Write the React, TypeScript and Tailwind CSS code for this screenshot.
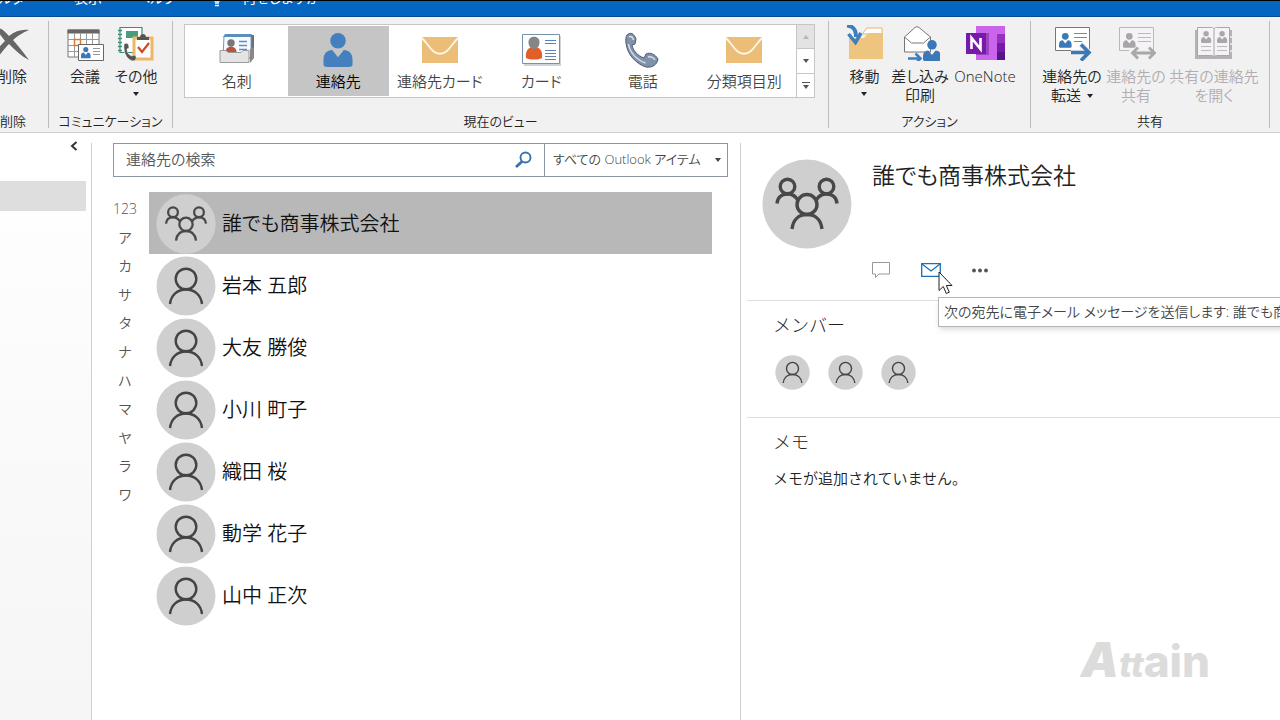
import type { ReactNode } from "react";

const people = ["岩本 五郎", "大友 勝俊", "小川 町子", "織田 桜", "動学 花子", "山中 正次"];
const indexKeys = ["123", "ア", "カ", "サ", "タ", "ナ", "ハ", "マ", "ヤ", "ラ", "ワ"];

/* ---------- Avatars ---------- */

const PersonAvatar = ({ className }: { className: string }) => (
    <svg viewBox="0 0 60 60" className={className} fill="none" stroke="#444" strokeWidth="2.400" aria-hidden="true">
        <circle cx="30" cy="30" r="29.5" fill="#cfcfcf" stroke="none" />
        <circle cx="30" cy="23" r="10.3" />
        <path d="M14 48c1-9 7.500-14.500 16-14.500S45 39 46 48" />
    </svg>
);

const GroupAvatar = ({ className }: { className: string }) => (
    <svg viewBox="0 0 90 90" className={className} fill="none" stroke="#484848" strokeWidth="3.400" aria-hidden="true">
        <circle cx="45" cy="45" r="44.500" fill="#cfcfcf" stroke="none" />
        <circle cx="25.500" cy="27.500" r="7.300" />
        <circle cx="64.500" cy="27.500" r="7.300" />
        <circle cx="45" cy="45.500" r="10" />
        <path d="M15 44.500c.5-6 4.500-9.500 10.500-9.500 5 0 8.500 2.500 10.500 6.500M75 44.500c-.5-6-4.500-9.500-10.500-9.500-5 0-8.500 2.500-10.500 6.500" />
        <path d="M30 70c1-9 6.500-14.500 15-14.500S59 61 60 70" />
    </svg>
);

/* ---------- Ribbon icons ---------- */

const Bust = ({ x, y, s = 1, fill = "#3c78b8" }: { x: number; y: number; s?: number; fill?: string }) => (
    <g transform={`translate(${x} ${y}) scale(${s})`} fill={fill}>
        <circle cx="6" cy="3.200" r="3.200" />
        <path d="M0 13V11c0-2.500 1.500-4 3.600-4L6 10l2.400-3c2.100 0 3.600 1.500 3.600 4v2c0 .8-.8 1-1.600 1H1.600C.8 14 0 13.800 0 13z" />
    </g>
);

const Icon = ({ children }: { children: ReactNode }) => (
    <svg viewBox="0 0 40 36" className="h-9 w-10 shrink-0" fill="none" aria-hidden="true">
        {children}
    </svg>
);

const DeleteIcon = () => (
    <Icon>
        <path d="M3 3c5-1 9 2 14 8C23 6 30 4 37 5c-7 3-12 6-16 10 6 7 11 13 16 20C29 31 23 25 17 19 13 23 8 29 5 34L1 30c4-6 8-10 12-14C9 11 6 7 3 3z" fill="#666" />
    </Icon>
);

const MeetingIcon = () => (
    <Icon>
        <path d="M3 5h31v27H3z" fill="#fff" stroke="#777" />
        <path d="M2.500 4.500h32v4h-32z" fill="#666" />
        <path d="M3 14.500h31M3 20.500h31M3 26.500h31M9.500 8v24M15.500 8v24M21.500 8v24M27.500 8v24" stroke="#999" />
        <path d="M9.500 14.500h6v6h-6z" stroke="#e07b2d" strokeWidth="1.500" />
        <path d="M13.500 19.500h25v16h-25z" fill="#fff" stroke="#666" />
        <Bust x={16} y={22} s={0.8} />
        <path d="M28 23.500h7M28 26.500h7M28 29.500h7" stroke="#999" />
    </Icon>
);

const MoreIcon = () => (
    <Icon>
        <path d="M4 2.500h22v25H4z" fill="#fff" stroke="#3c8f72" strokeWidth="1.200" />
        <path d="M2 5.500h4M2 9.500h4M2 13.500h4M2 17.500h4M2 21.500h4M2 25.500h4" stroke="#3c8f72" strokeWidth="1.400" />
        <path d="M10 6h12v7H10z" fill="#4b9b7d" />
        <path d="M18 13h18v21H18z" fill="#fff" stroke="#ecb766" strokeWidth="3" />
        <path d="M21 15v-3h3c0-4 6-4 6 0h3v3z" fill="#555" />
        <path d="M22 22l4 5 7-9" stroke="#d0491e" strokeWidth="2.200" />
        <path d="M8 19c3-2 5 0 5 4l-2 1c0 4 2 6 5 7l2-1c3 1 3 4 0 6-6 0-11-7-10-17z" fill="#555" stroke="#f1f1f1" strokeWidth=".6" />
    </Icon>
);

const BusinessCardIcon = () => (
    <Icon>
        <path d="M11 5l2-2h24v20l-4 4z" fill="#66707a" />
        <path d="M7 4.500h27v21H6z" fill="#f7fbff" stroke="#7396b8" />
        <path d="M8 2h27l-2 3H6z" fill="#5d8dbd" />
        <circle cx="14" cy="11" r="3.700" fill="#777" />
        <path d="M8.500 20c0-7 11-7 11 0z" fill="#b8543c" />
        <path d="M22 9.500h8M22 13.500h8M22 17.500h8" stroke="#5b8ccc" strokeWidth="1.300" />
        <path d="M33 17l4-2v11l-4 5z" fill="#888" />
        <path d="M3 18.500h6l2 2h13l2-2h6v12H3z" fill="#e4e4e4" stroke="#9a9a9a" />
    </Icon>
);

const ContactIcon = () => (
    <Icon>
        <Bust x={5.500} y={1} s={2.420} fill="#4380bd" />
    </Icon>
);

const EnvelopeIcon = () => (
    <Icon>
        <path d="M2 5h36v26H2z" fill="#ebbd76" />
        <path d="M2 6c4 4 7 9 11 13 5 4 9 4 14 0 4-4 7-9 11-13" stroke="#fff8ea" strokeWidth="1.800" />
    </Icon>
);

const CardIcon = () => (
    <Icon>
        <path d="M3 4h37v30H3z" fill="#d0d4d9" />
        <path d="M1.500 2.500h37v29h-37z" fill="#fff" stroke="#7991aa" />
        <path d="M5 26c-1-8 3-11 8-11s9 3 8 11c-4 2-12 2-16 0z" fill="#e35f2a" />
        <path d="M7.500 10c0-7 11-7 11 0 0 4-2 7-5.500 7s-5.500-3-5.500-7z" fill="#858585" />
        <path d="M24 8.500h11M24 11.500h11" stroke="#4f83cc" strokeWidth="1.200" />
        <path d="M24 18.500h11M24 21.500h11M24 24.500h11M24 27.500h11" stroke="#5f83ad" strokeWidth="1" />
    </Icon>
);

const PhoneIcon = () => (
    <Icon>
        <path d="M4 3c3-3 7-2 9 4l-1 5-3 1c1 6 6 11 12 13l2-4c4-2 9 0 12 5-1 6-6 9-12 8C13 32 4 22 3 11c-.5-3-.3-6 1-8z" fill="#8091a9" stroke="#4d5d74" />
        <path d="M6 5c2-1 4 0 4.500 3M5.500 12c1 8 8 16 17 19M25 25c3-1 6 1 7 3" stroke="#d5deea" strokeWidth="1.500" />
    </Icon>
);

const MoveIcon = () => (
    <Icon>
        <path d="M18 8l4-5h15v6H18z" fill="#fff" stroke="#e7b56a" />
        <path d="M4 13h15l4-5h15v26H4z" fill="#edc57f" />
        <path d="M2 .5C8 1 11 4 11 12" stroke="#3d7ebf" strokeWidth="4" />
        <path d="M3.500 9l7 8.500L16 8" stroke="#3d7ebf" strokeWidth="3.500" />
    </Icon>
);

const MailMergeIcon = () => (
    <Icon>
        <path d="M4.500 12L15 2.500c1.500-1 2.500-1 4 0L30.500 12v15h-26z" fill="#fff" stroke="#777" />
        <path d="M4.500 12l7 6h12l7-6" stroke="#777" />
        <Bust x={23} y={15} s={1.500} />
        <path d="M8 33.500h12M15.500 28.500l5 5-5 5" stroke="#3d7ebf" strokeWidth="2.600" />
    </Icon>
);

const OneNoteIcon = () => (
    <Icon>
        <path d="M11 1h29v34H11z" fill="#ca64ea" />
        <path d="M32 9h8v9h-8z" fill="#9332bf" />
        <path d="M32 18h8v9h-8z" fill="#7719aa" />
        <path d="M32 27h8v8h-8z" fill="#53148c" />
        <path d="M11 8h13v22H11z" fill="#9c44bd" />
        <path d="M1 8h20v21H1z" fill="#7719aa" />
        <path d="M6.500 24V13l9 11V13" stroke="#fff" strokeWidth="2.600" />
    </Icon>
);

const ForwardIcon = () => (
    <Icon>
        <path d="M3.500 2.500h34v23h-34z" fill="#fff" stroke="#777" />
        <Bust x={7} y={8} s={1.050} />
        <path d="M22 8.500h13M22 12.500h13M22 16.500h8" stroke="#888" />
        <path d="M19 27.500h17M28 19l9 8.500-9 7" stroke="#f1f1f1" strokeWidth="6" />
        <path d="M19 27.500h17M29 19.500l8 8-8 8" stroke="#3d78b5" strokeWidth="3.600" />
    </Icon>
);

const ShareIcon = () => (
    <Icon>
        <path d="M3.500 2.500h34v23h-34z" fill="#f6f3f6" stroke="#bbb6bb" />
        <Bust x={7} y={8} s={1.050} fill="#a9a5a9" />
        <path d="M22 8.500h13M22 12.500h13M22 16.500h13" stroke="#bbb" />
        <path d="M13 28h24" stroke="#f1f1f1" strokeWidth="8" />
        <path d="M17 28h20M22 22.500L16.500 28l5.500 5.500M33 22.500l5.500 5.500-5.500 5.500" stroke="#aaa7aa" strokeWidth="2.800" />
    </Icon>
);

const OpenSharedIcon = () => (
    <Icon>
        <path d="M1 5h37v29H1z" fill="#b5b1b5" />
        <path d="M3.500 2.500h14c2 0 2 1 2.500 1.500.5-.5.500-1.500 2.500-1.500h13v28h-13c-2 0-2 1-2.500 1.500-.5-.5-.5-1.500-2.500-1.500h-14z" fill="#f6f3f6" stroke="#aaa6aa" />
        <path d="M20 4v28" stroke="#aaa6aa" />
        <Bust x={7} y={6} s={0.850} fill="#aaa6aa" />
        <Bust x={23} y={6} s={0.850} fill="#aaa6aa" />
        <path d="M7 21.500h10M7 25.500h10M23 21.500h10M23 25.500h10" stroke="#bbb" />
        <path d="M36 12h3M36 19h3M36 26h3" stroke="#f1f1f1" strokeWidth="1.500" />
    </Icon>
);

const Caret = ({ className = "" }: { className?: string }) => (
    <svg viewBox="0 0 6 4" className={`h-1 w-1.5 shrink-0 ${className}`} aria-hidden="true">
        <path d="M0 0h6L3 4z" fill="currentColor" />
    </svg>
);

/* ---------- Ribbon ---------- */

const RibbonButton = ({ icon, children, className = "", disabled = false }: { icon: ReactNode; children: ReactNode; className?: string; disabled?: boolean }) => (
    <button
        type="button"
        disabled={disabled}
        className={`flex shrink-0 flex-col items-center pt-2 whitespace-nowrap disabled:text-[#b1adb1] ${className}`}
    >
        {icon}
        <span className="mt-1.5 flex flex-col items-center leading-[19px]">{children}</span>
    </button>
);

const RibbonGroup = ({ label, className, children }: { label: string; className: string; children: ReactNode }) => (
    <>
        <section aria-label={label} className={`flex flex-col justify-between pb-0.5 ${className}`}>
            <div className="flex justify-center">{children}</div>
            <p className="text-center text-[13px] leading-[18px] whitespace-nowrap">{label}</p>
        </section>
        <div className="my-1 w-px shrink-0 bg-[#bcbcbc]" />
    </>
);

const views = [
    { label: "名刺", icon: <BusinessCardIcon /> },
    { label: "連絡先", icon: <ContactIcon />, selected: true },
    { label: "連絡先カード", icon: <EnvelopeIcon /> },
    { label: "カード", icon: <CardIcon /> },
    { label: "電話", icon: <PhoneIcon /> },
    { label: "分類項目別", icon: <EnvelopeIcon /> },
];

const Ribbon = () => (
    <div className="flex h-[116px] border-b border-[#cfcfcf] bg-[#f1f1f1] pr-2.5 text-[#222]">
        <RibbonGroup label="削除" className="w-12 shrink-0 items-start">
            <RibbonButton icon={<DeleteIcon />} className="-ml-2 w-10">削除</RibbonButton>
        </RibbonGroup>

        <RibbonGroup label="コミュニケーション" className="w-[123px] shrink-0">
            <RibbonButton icon={<MeetingIcon />} className="w-[51px]">会議</RibbonButton>
            <RibbonButton icon={<MoreIcon />} className="w-[51px]">
                その他
                <Caret className="mt-1.5" />
            </RibbonButton>
        </RibbonGroup>

        {/* View gallery */}
        <RibbonGroup label="現在のビュー" className="min-w-0 flex-1">
            <div className="mt-[7px] mr-[13px] ml-[11px] flex h-[74px] min-w-0 flex-1 border border-[#c6c6c6] bg-white">
                <div className="grid min-w-0 flex-1 grid-cols-6 p-px">
                    {views.map((view) => (
                        <button
                            key={view.label}
                            type="button"
                            aria-pressed={!!view.selected}
                            className={`flex flex-col items-center pt-1.5 whitespace-nowrap ${view.selected ? "bg-[#c5c5c5] text-black" : "text-[#444]"}`}
                        >
                            {view.icon}
                            <span className="mt-1 leading-[18px]">{view.label}</span>
                        </button>
                    ))}
                </div>
                <div className="flex w-[18px] flex-col divide-y divide-[#c6c6c6] border-l border-[#c6c6c6] text-[#555]">
                    <button type="button" aria-label="上へ" disabled className="flex flex-1 items-center justify-center bg-[#e3e3e3] text-[#b5b5b5]">
                        <Caret className="rotate-180" />
                    </button>
                    <button type="button" aria-label="下へ" className="flex flex-1 items-center justify-center">
                        <Caret />
                    </button>
                    <button type="button" aria-label="その他のビュー" className="flex flex-1 flex-col items-center justify-center gap-0.5">
                        <span className="h-px w-2 bg-[#555]" />
                        <Caret />
                    </button>
                </div>
            </div>
        </RibbonGroup>

        <RibbonGroup label="アクション" className="w-[201px] shrink-0">
            <RibbonButton icon={<MoveIcon />} className="w-[51px]">
                移動
                <Caret className="mt-1.5" />
            </RibbonButton>
            <RibbonButton icon={<MailMergeIcon />} className="w-[60px]">
                <span>差し込み</span>
                <span>印刷</span>
            </RibbonButton>
            <RibbonButton icon={<OneNoteIcon />} className="w-[70px]">OneNote</RibbonButton>
        </RibbonGroup>

        <RibbonGroup label="共有" className="w-[238px] shrink-0">
            <RibbonButton icon={<ForwardIcon />} className="w-16">
                <span>連絡先の</span>
                <span className="flex items-center gap-1.5">
                    転送
                    <Caret />
                </span>
            </RibbonButton>
            <RibbonButton icon={<ShareIcon />} className="w-16" disabled>
                <span>連絡先の</span>
                <span>共有</span>
            </RibbonButton>
            <RibbonButton icon={<OpenSharedIcon />} className="w-[92px]" disabled>
                <span>共有の連絡先</span>
                <span>を開く</span>
            </RibbonButton>
        </RibbonGroup>
    </div>
);

/* ---------- Contact list ---------- */

const ContactList = () => (
    <div className="border-r border-[#cfcfcf] pl-[15px]">
        <div className="mr-3 ml-1.5 flex h-[34px] border border-[#8d96a5] bg-white">
            <input
                type="text"
                aria-label="連絡先の検索"
                placeholder="連絡先の検索"
                className="min-w-0 flex-1 pb-0.5 pl-3 outline-none placeholder:text-[#555]"
            />
            <button type="button" aria-label="検索" className="flex w-[42px] items-center justify-center">
                <svg viewBox="0 0 18 18" className="h-[18px] w-[18px]" fill="none" stroke="#3a70b3" aria-hidden="true">
                    <circle cx="11.500" cy="6.500" r="5" strokeWidth="1.900" />
                    <path d="M8 10.500L2 16" strokeWidth="2.800" />
                </svg>
            </button>
            <div className="flex w-[183px] items-center border-l border-[#8d96a5] pr-1.5">
                <select aria-label="検索範囲" className="min-w-0 flex-1 appearance-none pl-2 text-[13px] text-[#444] outline-none">
                    <option>すべての Outlook アイテム</option>
                </select>
                <Caret className="text-[#444]" />
            </div>
        </div>

        <div className="mt-[15px] flex gap-1.5">
            <nav aria-label="索引" className="flex h-[317px] w-9 flex-col pt-[3px] text-sm text-[#555]">
                {indexKeys.map((key) => (
                    <a key={key} href={`#${key}`} className="flex flex-1 items-center justify-center">
                        {key}
                    </a>
                ))}
            </nav>
            <ul className="mr-7 flex-1 text-xl text-[#111]">
                <li className="flex h-[62px] items-center gap-1.5 bg-[#b8b8b8] pt-0.5 pl-[7px]">
                    <GroupAvatar className="h-[60px] w-[60px]" />
                    誰でも商事株式会社
                </li>
                {people.map((name) => (
                    <li key={name} className="flex h-[62px] items-center gap-1.5 pt-0.5 pl-[7px]">
                        <PersonAvatar className="h-[60px] w-[60px]" />
                        {name}
                    </li>
                ))}
            </ul>
        </div>
    </div>
);

/* ---------- Detail pane ---------- */

const ContactDetail = () => (
    <div className="min-w-0 pl-1.5">
        <div className="flex gap-5 border-b border-[#dedede] pt-4 pb-[18px] pl-[15px]">
            <GroupAvatar className="h-[90px] w-[90px] shrink-0" />
            <div>
                <h1 className="text-[23px] leading-8 text-[#222]">誰でも商事株式会社</h1>
                <div className="mt-[67px] flex h-6 gap-[29px]">
                    <button type="button" aria-label="チャット" className="flex w-5 items-center">
                        <svg viewBox="0 0 20 18" className="h-[18px] w-5" fill="none" stroke="#999" aria-hidden="true">
                            <path d="M.5 1.500h17v11.500H7L3.500 16.500V13h-3z" />
                        </svg>
                    </button>
                    <div className="relative flex">
                        <button type="button" aria-label="電子メールを送信" aria-describedby="mail-tip" className="flex w-5 items-center">
                            <svg viewBox="0 0 20 14" className="h-3.5 w-5" fill="none" stroke="#1f6fb8" strokeWidth="1.300" aria-hidden="true">
                                <path d="M.7.700h18.600v12.600H.7z" />
                                <path d="M1 1l9 7 9-7" />
                            </svg>
                        </button>
                        {/* Tooltip for the mail button */}
                        <div
                            id="mail-tip"
                            role="tooltip"
                            className="absolute top-[39px] left-[17px] border border-[#b5b5b5] bg-white px-[5px] text-sm leading-7 whitespace-nowrap text-[#444] shadow-md"
                        >
                            次の宛先に電子メール メッセージを送信します: 誰でも商事株式会社
                        </div>
                        <svg viewBox="0 0 16 24" className="absolute top-[13px] left-[17px] h-6 w-4" aria-hidden="true">
                            <path d="M1 1v18.500l4.300-4 3 7 3-1.300-3-6.700h5.700z" fill="#fff" stroke="#222" />
                        </svg>
                    </div>
                    <button type="button" aria-label="その他の操作" className="flex w-5 items-center">
                        <svg viewBox="0 0 20 6" className="h-1.5 w-5" fill="#555" aria-hidden="true">
                            <circle cx="4" cy="3.500" r="1.900" />
                            <circle cx="10" cy="3.500" r="1.900" />
                            <circle cx="16" cy="3.500" r="1.900" />
                        </svg>
                    </button>
                </div>
            </div>
        </div>

        <section className="border-b border-[#dedede] pt-3 pb-[27px] pl-[26px]">
            <h2 className="text-lg leading-6 font-light [font-feature-settings:normal]">メンバー</h2>
            <div className="mt-[18px] flex gap-[18px] pl-0.5">
                <PersonAvatar className="h-[35px] w-[35px]" />
                <PersonAvatar className="h-[35px] w-[35px]" />
                <PersonAvatar className="h-[35px] w-[35px]" />
            </div>
        </section>

        <section className="pt-3 pl-[26px] [font-feature-settings:normal]">
            <h2 className="text-lg leading-6 font-light">メモ</h2>
            <p className="mt-3 leading-6">メモが追加されていません。</p>
        </section>
    </div>
);

export default function App() {
    return (
        <div className="relative flex min-h-screen flex-col overflow-hidden bg-white font-['Open_Sans','Noto_Sans_CJK_JP',sans-serif] text-[15px] font-[350] text-[#222] [font-feature-settings:'palt']">
            {/* Tab strip, scrolled almost out of view */}
            <header className="flex h-[17px] items-end overflow-hidden border-t border-b border-t-black border-b-[#0b4a94] bg-[#0566c1] text-white">
                <nav aria-label="リボン" className="flex h-[27px] shrink-0 items-start text-sm leading-[18px] font-normal whitespace-nowrap">
                    <a href="#folder" className="-ml-6 w-[98px]">フォルダー</a>
                    <a href="#view" className="w-[62px]">表示</a>
                    <a href="#help" className="w-[76px]">ヘルプ</a>
                    <a href="#tell-me" className="flex gap-5">
                        <svg viewBox="0 0 10 18" className="h-[18px] w-2.5" fill="none" stroke="#fff" strokeWidth="1.500" aria-hidden="true">
                            <path d="M3 12C1 9 1 8 1 6c0-6 8-6 8 0 0 2 0 3-2 6zM3 14h4M3 16.500h4" />
                        </svg>
                        何をしますか
                    </a>
                </nav>
            </header>

            <Ribbon />

            <main className="grid flex-1 grid-cols-[92px_649fr_539fr] pt-2.5">
                <aside className="border-r border-[#cfcfcf] bg-linear-to-b from-white via-[#fafafa] to-[#f6f6f6]">
                    <button type="button" aria-label="フォルダー ウィンドウの最小化" className="mt-[-3px] ml-[70px] flex h-[11px] w-2 items-center">
                        <svg viewBox="0 0 8 10" className="h-2.5 w-2" fill="none" stroke="#333" strokeWidth="2" aria-hidden="true">
                            <path d="M6.500 1L2 5l4.500 4" />
                        </svg>
                    </button>
                    <div className="mt-[30px] mr-[5px] h-[30px] bg-[#dedede]" />
                </aside>
                <ContactList />
                <ContactDetail />
            </main>

            <div className="absolute right-[70px] bottom-[30px] font-['Inter',sans-serif] text-[44px] leading-[50px] font-extrabold text-[#dcdcdc]">
                <i className="text-5xl leading-[50px] font-black">A</i>
                <i className="text-[34px]">tt</i>
                ain
            </div>
        </div>
    );
}
